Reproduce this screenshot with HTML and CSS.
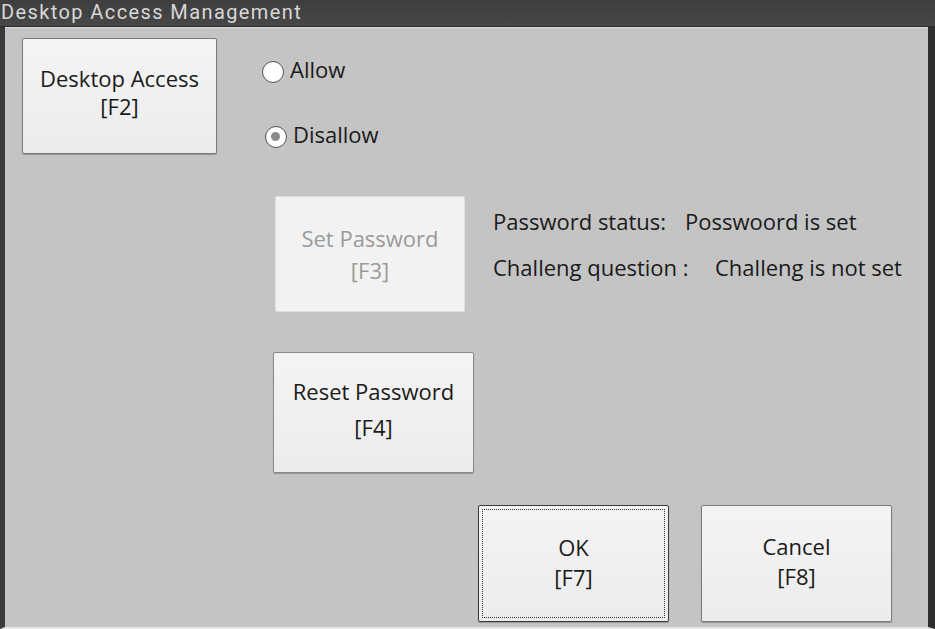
FILE: index.html
```html
<!DOCTYPE html>
<html>
<head>
<meta charset="utf-8">
<link rel="stylesheet" href="styles.css">
</head>
<body>
<div class="window">
  <div class="titlebar"><span class="title-text">Desktop Access Management</span></div>
  <div class="client">
    <div class="top-row">
      <button class="btn btn-desktop">Desktop Access<br>[F2]</button>
      <div class="radios">
        <label class="radio"><span class="circle"></span>Allow</label>
        <label class="radio radio-second"><span class="circle checked"></span>Disallow</label>
      </div>
    </div>
    <div class="mid-row">
      <button class="btn btn-set" disabled>Set Password<br>[F3]</button>
      <div class="info">
        <div class="info-line"><span class="lbl lbl1">Password status:</span><span>Posswoord is set</span></div>
        <div class="info-line"><span class="lbl lbl2">Challeng question :</span><span>Challeng is not set</span></div>
      </div>
    </div>
    <button class="btn btn-reset">Reset Password<br>[F4]</button>
    <div class="bottom-row">
      <button class="btn btn-ok"><span class="focus">OK<br>[F7]</span></button>
      <button class="btn btn-cancel">Cancel<br>[F8]</button>
    </div>
  </div>
</div>
</body>
</html>
```

FILE: styles.css
```css
html, body {
  margin: 0;
  padding: 0;
  width: 935px;
  height: 629px;
  overflow: hidden;
  background: #c4c4c4;
  font-family: "Open Sans", "Noto Sans", sans-serif;
}
.window {
  width: 935px;
  height: 629px;
  box-sizing: border-box;
  border-left: 5px solid #3a3a3a;
  border-right: 7px solid #2e2e2e;
  border-bottom: 2px solid #e6e6e6;
  background: #c4c4c4;
  display: flex;
  flex-direction: column;
}
.titlebar {
  height: 27px;
  margin-left: -5px;
  margin-right: -7px;
  padding-left: 1px;
  background: linear-gradient(#3e3e3e, #474747);
  color: #d8d8d8;
  font-family: Roboto, "Open Sans", sans-serif;
  font-size: 20px;
  line-height: 24px;
  letter-spacing: 1.4px;
  box-sizing: border-box;
  border-bottom: 1px solid #2c2c2c;
  white-space: nowrap;
  display: flex;
  align-items: flex-start;
}
.title-text {
  display: block;
}
.client {
  flex: 1;
  padding: 10px 0 0 17px;
  border-top: 1px solid #d8d8d8;
  display: flex;
  flex-direction: column;
  align-items: flex-start;
}
.btn {
  font-family: inherit;
  font-size: 22px;
  color: #1a1a1a;
  background: linear-gradient(#f4f4f4, #ececec);
  border: 1px solid #7a7a7a;
  border-radius: 2px;
  box-shadow: 0 1px 1px rgba(0,0,0,0.25);
  padding: 0;
  margin: 0;
  line-height: 28px;
  text-align: center;
  box-sizing: border-box;
}
.top-row {
  display: flex;
  align-items: flex-start;
}
.btn-desktop {
  width: 195px;
  height: 116px;
  padding-bottom: 9px;
}
.radios {
  margin-left: 45px;
  padding-top: 18px;
  display: flex;
  flex-direction: column;
}
.radio {
  display: flex;
  align-items: center;
  font-size: 22px;
  color: #1a1a1a;
  height: 26px;
}
.radio .circle {
  margin-top: 5px;
}
.radio-second {
  margin-top: 39px;
  margin-left: 3px;
}
.circle {
  width: 22px;
  height: 22px;
  border-radius: 50%;
  border: 1.5px solid #5a5a5a;
  background: radial-gradient(circle, #ffffff 55%, #e8e8e8 100%);
  box-sizing: border-box;
  margin-right: 6px;
  position: relative;
  flex: none;
}
.circle.checked::after {
  content: "";
  position: absolute;
  left: 5px;
  top: 5px;
  width: 9px;
  height: 9px;
  border-radius: 50%;
  background: #8a8a8a;
}
.mid-row {
  display: flex;
  margin-top: 42px;
  margin-left: 253px;
  align-items: flex-start;
}
.btn-set {
  width: 190px;
  height: 116px;
  background: #f2f2f2;
  border: 1px solid #e0e0e0;
  box-shadow: none;
  color: #9a9a9a;
  line-height: 32px;
}
.info {
  margin-left: 28px;
  padding-top: 10px;
  font-size: 22px;
  color: #1a1a1a;
}
.info-line {
  display: flex;
  height: 46px;
  line-height: 30px;
  white-space: nowrap;
}
.lbl1 {
  width: 192px;
}
.lbl2 {
  width: 222px;
}
.btn-reset {
  margin-top: 40px;
  margin-left: 251px;
  width: 201px;
  height: 121px;
  line-height: 36px;
  padding-bottom: 8px;
  border-color: #8a8a8a;
}
.bottom-row {
  display: flex;
  gap: 32px;
  margin-top: 32px;
  align-self: flex-end;
  margin-right: 36px;
}
.btn-ok, .btn-cancel {
  width: 191px;
  height: 117px;
  line-height: 30px;
}
.btn-cancel {
  padding-bottom: 6px;
}
.btn-ok {
  border: 1px solid #3a3a3a;
  padding: 3px;
}
.focus {
  display: flex;
  align-items: center;
  justify-content: center;
  width: 100%;
  height: 100%;
  padding-bottom: 4px;
  border: 1px dotted #333;
  box-sizing: border-box;
}
```
